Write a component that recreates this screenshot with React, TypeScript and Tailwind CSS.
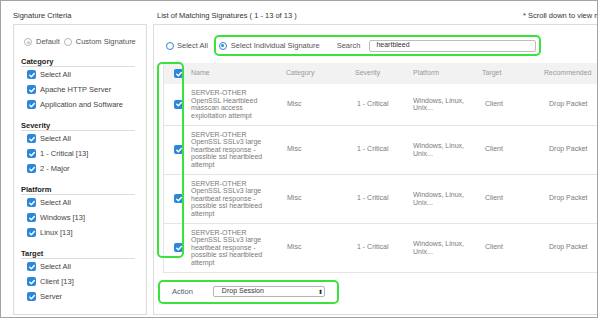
import React from 'react';

type Row = { name: string[] };

const rows: Row[] = [
  { name: ['SERVER-OTHER', 'OpenSSL Heartbleed', 'masscan access', 'exploitation attempt'] },
  { name: ['SERVER-OTHER', 'OpenSSL SSLv3 large', 'heartbeat response -', 'possible ssl heartbleed', 'attempt'] },
  { name: ['SERVER-OTHER', 'OpenSSL SSLv3 large', 'heartbeat response -', 'possible ssl heartbleed', 'attempt'] },
  { name: ['SERVER-OTHER', 'OpenSSL SSLv3 large', 'heartbeat response -', 'possible ssl heartbleed', 'attempt'] },
];

const groups = [
  { title: 'Category', items: ['Select All', 'Apache HTTP Server', 'Application and Software'] },
  { title: 'Severity', items: ['Select All', '1 - Critical [13]', '2 - Major'] },
  { title: 'Platform', items: ['Select All', 'Windows [13]', 'Linux [13]'] },
  { title: 'Target', items: ['Select All', 'Client [13]', 'Server'] },
];

function Check() {
  return (
    <span className="flex h-[9px] w-[9px] shrink-0 items-center justify-center rounded-[2px] bg-[#2b88d8]">
      <svg viewBox="0 0 10 10" className="h-[8px] w-[8px]" fill="none" stroke="white" strokeWidth="1.8" strokeLinecap="round" strokeLinejoin="round">
        <path d="M2.2 5.3 4.2 7.2 7.9 3.2" />
      </svg>
    </span>
  );
}

function Radio({ on, blue }: { on?: boolean; blue?: boolean }) {
  return (
    <span
      className={
        blue
          ? 'flex h-[8px] w-[8px] shrink-0 items-center justify-center rounded-full border-[1.5px] border-[#2b88d8] bg-white'
          : 'flex h-[8px] w-[8px] shrink-0 items-center justify-center rounded-full border border-[#b5b5b5] bg-white'
      }
    >
      {on && <span className={blue ? 'h-[3px] w-[3px] rounded-full bg-[#2b88d8]' : 'h-[3px] w-[3px] rounded-full bg-[#c8c8c8]'} />}
    </span>
  );
}

export default function App() {
  return (
    <div className="h-[320px] w-[600px] bg-white font-['Liberation_Sans',Arial,sans-serif]">
      <div className="flex h-[318px] w-[598px] overflow-hidden border border-[#a3a3a3]">
        {/* Signature Criteria */}
        <div className="shrink-0 pl-[12px] pt-[10px]">
          <div className="text-[7.5px] leading-[10px] text-[#333]">Signature Criteria</div>
          <div className="mt-[3px] h-[291px] w-[134px] border border-[#dcdcdc] pl-[7px] pr-[11px] pt-[12px] text-[7.5px] text-[#444]">
            <div className="flex h-[10px] items-center whitespace-nowrap pl-[3px]">
              <Radio on />
              <span className="ml-[4px] text-[#555]">Default</span>
              <span className="ml-[4px]">
                <Radio />
              </span>
              <span className="ml-[4px] text-[#555]">Custom Signature</span>
            </div>
            {groups.map((g, i) => (
              <div key={g.title}>
                <div className={(i === 0 ? 'mt-[10px] ' : 'mt-[9px] ') + 'border-b border-[#dcdcdc] font-bold leading-[9px] text-[#222]'}>
                  {g.title}
                </div>
                {g.items.map((it) => (
                  <div key={it} className="flex h-[15px] items-center pl-[6px]">
                    <Check />
                    <span className="ml-[4px] whitespace-nowrap">{it}</span>
                  </div>
                ))}
              </div>
            ))}
          </div>
        </div>

        {/* Matching signatures */}
        <div className="ml-[6px] w-[470px] shrink-0 pt-[10px]">
          <div className="flex whitespace-nowrap pl-[4px] text-[7.5px] leading-[10px] text-[#333]">
            <span className="w-[366px] shrink-0">List of Matching Signatures ( 1 - 13 of 13 )</span>
            <span className="shrink-0">* Scroll down to view more records</span>
          </div>
          <div className="mt-[3px] h-[291px] border border-[#dcdcdc] pt-[10px] text-[7px] text-[#555]">
            <div className="flex items-center">
              <span className="ml-[12px]">
                <Radio blue />
              </span>
              <span className="ml-[3px] text-[7.5px]">Select All</span>
              <div className="ml-[6px] flex h-[21px] w-[327px] items-center rounded-[5px] border-2 border-[#3be23b] pl-[3px] text-[7.5px]">
                <Radio blue on />
                <span className="ml-[4px]">Select Individual Signature</span>
                <span className="ml-[17px]">Search</span>
                <div className="ml-[9px] flex h-[12px] w-[167px] items-center rounded-[2px] border border-[#bdbdbd] pl-[6px] text-[7px] text-[#333]">
                  heartbleed
                </div>
              </div>
            </div>

            {/* table */}
            <div className="relative ml-[9px] mt-[7px] border-l border-[#e2e2e2]">
              <div className="grid h-[21px] grid-cols-[27px_95px_69px_58px_69px_62px_90px] items-center bg-[#f2f2f2] text-[#999]">
                <div className="flex justify-center pl-[2px]">
                  <Check />
                </div>
                <div>Name</div>
                <div>Category</div>
                <div>Severity</div>
                <div>Platform</div>
                <div>Target</div>
                <div>Recommended</div>
              </div>
              {rows.map((r, i) => (
                <div
                  key={i}
                  className="grid grid-cols-[27px_95px_69px_58px_69px_62px_90px] items-center border-b border-[#e4e4e4] text-[#7a7a7a]"
                >
                  <div className="flex justify-center pl-[2px]">
                    <Check />
                  </div>
                  <div className="py-[5.25px] leading-[7.5px]">
                    {r.name.map((l, j) => (
                      <div key={j} className="whitespace-nowrap">
                        {l}
                      </div>
                    ))}
                  </div>
                  <div className="pl-[1px]">Misc</div>
                  <div className="pl-[2px]">1 - Critical</div>
                  <div className="leading-[7.5px]">
                    Windows, Linux,
                    <br />
                    Unix...
                  </div>
                  <div className="pl-[3px]">Client</div>
                  <div className="pl-[5px]">Drop Packet</div>
                </div>
              ))}
              {/* highlighted checkbox column */}
              <div className="absolute left-[-7px] top-[-1px] h-[196px] w-[27px] rounded-[5px] border-2 border-[#3be23b]" />
            </div>

            {/* action */}
            <div className="ml-[4px] mt-[7px] flex h-[24px] w-[181px] items-center rounded-[5px] border-2 border-[#3be23b] pl-[12px] text-[7.5px]">
              <span className="text-[#4d5d70]">Action</span>
              <div className="ml-[20px] flex h-[11px] w-[112px] items-center justify-between rounded-[2px] border border-[#b5b5b5] pl-[8px] pr-[1px] text-[7px] text-[#333]">
                <span>Drop Session</span>
                <span className="text-[6px] leading-none text-[#222]">⬍</span>
              </div>
            </div>
          </div>
        </div>
      </div>
    </div>
  );
}
